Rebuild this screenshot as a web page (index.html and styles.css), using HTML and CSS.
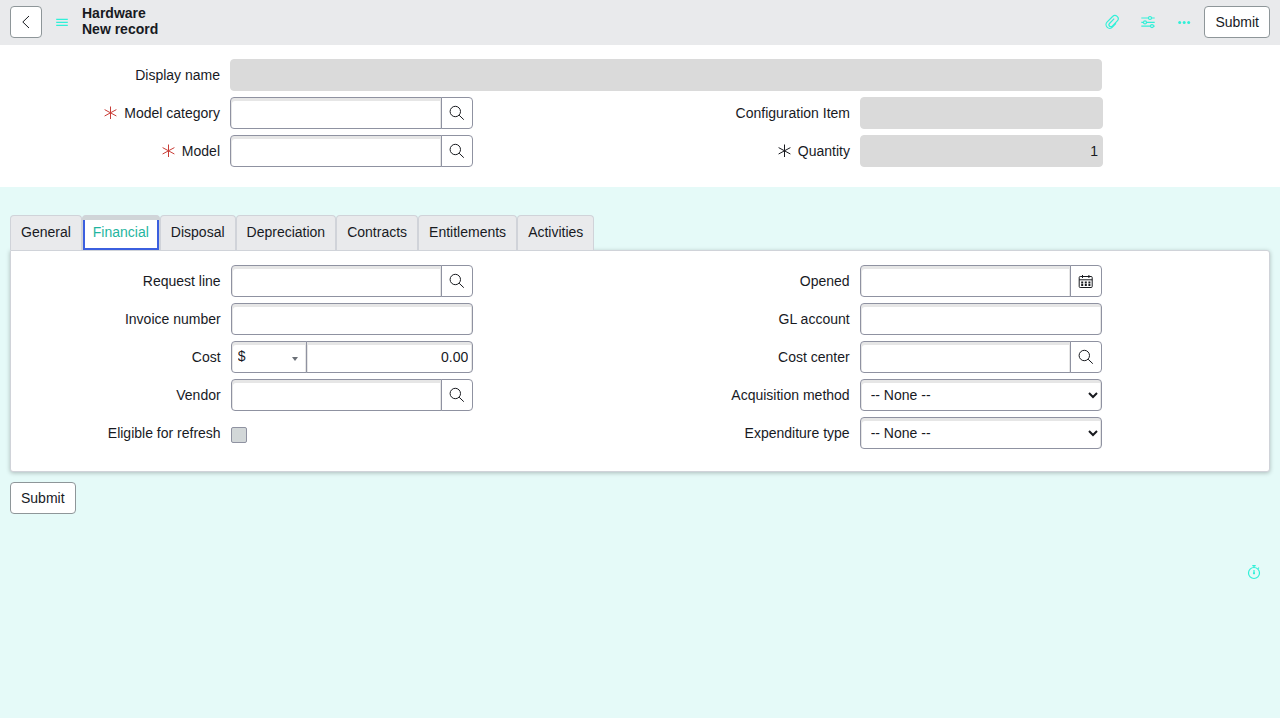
FILE: index.html
```html
<!DOCTYPE html>
<html lang="en">
<head>
<meta charset="utf-8">
<title>Hardware | New record</title>
<meta name="viewport" content="width=device-width, initial-scale=1">
<link rel="stylesheet" href="styles.css">
</head>
<body>
<svg class="sprite" aria-hidden="true">
  <symbol id="search" viewBox="0 0 16 16"><circle cx="6.3" cy="6.5" r="5.2"/><path d="M10.1 10.2 14.8 14.7"/></symbol>
  <symbol id="required" viewBox="0 0 14 14"><path d="M6.5.5v12.5M.6 3.6l11.8 6.4M12.4 3.6.6 10"/></symbol>
</svg>
<div class="page">
  <header class="toolbar">
    <button class="button button-back" type="button" aria-label="Back"><svg class="icon" viewBox="0 0 16 16"><path d="M11 2 4.8 8l6.2 6"/></svg></button>
    <button class="icon-button menu-button" type="button" aria-label="Menu"><svg class="icon" viewBox="0 0 16 16"><path d="M2.2 5.4h11.6M2.2 8.4h11.6M2.2 11.4h11.6"/></svg></button>
    <h1 class="title"><span>Hardware</span><span>New record</span></h1>
    <div class="actions">
      <button class="icon-button" type="button" aria-label="Manage attachments"><svg class="icon" viewBox="0 0 16 16"><path d="M12 9.3 8.4 13.1a3.6 3.6 0 0 1-5.4-4.9l5.6-5.7a3.2 3.2 0 0 1 4.7 4.4l-5 5.2a1.9 1.9 0 0 1-2.8-2.6l4.7-4.8"/></svg></button>
      <button class="icon-button" type="button" aria-label="Personalize form"><svg class="icon" viewBox="0 0 16 16"><path d="M1.3 4h7.2M11.5 4h3.2M1.3 8.4h2.2M6.5 8.4h8.2M1.3 12.1h9.2M13.5 12.1h1.2"/><circle cx="10" cy="4" r="1.5"/><circle cx="5" cy="8.4" r="1.5"/><circle cx="12" cy="12.1" r="1.5"/></svg></button>
      <button class="icon-button" type="button" aria-label="More options"><svg class="icon icon-solid" viewBox="0 0 16 16"><circle cx="3.7" cy="8.4" r="1.5"/><circle cx="8.2" cy="8.4" r="1.5"/><circle cx="12.7" cy="8.4" r="1.5"/></svg></button>
      <button class="button" type="submit" form="record">Submit</button>
    </div>
  </header>

  <form id="record" class="record">
    <section class="summary">
      <div class="field field-wide">
        <label for="display-name">Display name</label>
        <input class="control" id="display-name" type="text" readonly>
      </div>
      <div class="columns">
        <div class="column">
          <div class="field">
            <label for="category"><svg class="mark mark-red"><use href="#required"/></svg>Model category</label>
            <div class="group"><input class="control" id="category" type="text"><button class="addon" type="button" aria-label="Look up model category"><svg class="icon"><use href="#search"/></svg></button></div>
          </div>
          <div class="field">
            <label for="model"><svg class="mark mark-red"><use href="#required"/></svg>Model</label>
            <div class="group"><input class="control" id="model" type="text"><button class="addon" type="button" aria-label="Look up model"><svg class="icon"><use href="#search"/></svg></button></div>
          </div>
        </div>
        <div class="column">
          <div class="field">
            <label for="ci">Configuration Item</label>
            <input class="control" id="ci" type="text" readonly>
          </div>
          <div class="field">
            <label for="quantity"><svg class="mark"><use href="#required"/></svg>Quantity</label>
            <input class="control number" id="quantity" type="text" value="1" readonly>
          </div>
        </div>
      </div>
    </section>

    <section class="details">
      <div class="tabs" role="tablist">
        <button class="tab" type="button" role="tab">General</button>
        <button class="tab tab-active" type="button" role="tab" aria-selected="true"><span class="tab-focus">Financial</span></button>
        <button class="tab" type="button" role="tab">Disposal</button>
        <button class="tab" type="button" role="tab">Depreciation</button>
        <button class="tab" type="button" role="tab">Contracts</button>
        <button class="tab" type="button" role="tab">Entitlements</button>
        <button class="tab" type="button" role="tab">Activities</button>
      </div>
      <div class="panel columns" role="tabpanel">
        <div class="column">
          <div class="field">
            <label for="request">Request line</label>
            <div class="group"><input class="control" id="request" type="text"><button class="addon" type="button" aria-label="Look up request line"><svg class="icon"><use href="#search"/></svg></button></div>
          </div>
          <div class="field">
            <label for="invoice">Invoice number</label>
            <input class="control" id="invoice" type="text">
          </div>
          <div class="field">
            <label for="cost">Cost</label>
            <div class="group">
              <div class="currency"><select class="control" aria-label="Currency"><option>$</option></select></div>
              <input class="control number" id="cost" type="text" value="0.00">
            </div>
          </div>
          <div class="field">
            <label for="vendor">Vendor</label>
            <div class="group"><input class="control" id="vendor" type="text"><button class="addon" type="button" aria-label="Look up vendor"><svg class="icon"><use href="#search"/></svg></button></div>
          </div>
          <div class="field">
            <label for="eligible">Eligible for refresh</label>
            <input class="checkbox" id="eligible" type="checkbox">
          </div>
        </div>
        <div class="column">
          <div class="field">
            <label for="opened">Opened</label>
            <div class="group"><input class="control" id="opened" type="text"><button class="addon" type="button" aria-label="Select date and time"><svg class="icon" viewBox="0 0 16 16"><rect x="1.2" y="3.5" width="13" height="11" rx="1"/><path d="M1.2 6.8h13M4.5 2v3M10.9 2v3"/><path class="dots" d="M3.2 9.5h2M6.8 9.5h2M10.4 9.5h2M3.2 12h2M6.8 12h2M10.4 12h2"/></svg></button></div>
          </div>
          <div class="field">
            <label for="gl">GL account</label>
            <input class="control" id="gl" type="text">
          </div>
          <div class="field">
            <label for="center">Cost center</label>
            <div class="group"><input class="control" id="center" type="text"><button class="addon" type="button" aria-label="Look up cost center"><svg class="icon"><use href="#search"/></svg></button></div>
          </div>
          <div class="field">
            <label for="method">Acquisition method</label>
            <select class="control" id="method"><option>-- None --</option></select>
          </div>
          <div class="field">
            <label for="expenditure">Expenditure type</label>
            <select class="control" id="expenditure"><option>-- None --</option></select>
          </div>
        </div>
      </div>
      <button class="button" type="submit">Submit</button>
    </section>
  </form>

  <footer class="footer">
    <button class="icon-button" type="button" aria-label="Response time"><svg class="icon" viewBox="0 0 16 16"><circle cx="8" cy="9" r="5.5"/><path d="M6.3 1.6h3.4M8 1.6v1.9M8 6v3.6M12 4.6l1-1"/><circle cx="8" cy="9.3" r=".5"/></svg></button>
  </footer>
</div>
</body>
</html>
```
FILE: styles.css
```css
* { box-sizing: border-box; }

body {
  margin: 0;
  padding-right: 8px;
  background: #fff;
  color: #181a1f;
  font: 14px/20px "Liberation Sans", Arial, sans-serif;
}

button, input, select { font: inherit; color: inherit; margin: 0; }

.sprite { display: none; }

.page {
  display: flex;
  flex-direction: column;
  min-height: 100vh;
  background: #e5faf8;
}

.icon {
  display: block;
  width: 16px;
  height: 16px;
  fill: none;
  stroke: currentColor;
  stroke-width: 1;
}
.icon-solid { fill: currentColor; stroke: none; }
.dots { stroke-width: 2; stroke-dasharray: none; }

/* Toolbar */
.toolbar {
  display: flex;
  align-items: center;
  padding: 5px 10px 6px;
  background: #e9eaec;
}
.title { margin: 0 0 2px 12px; font-size: 14px; line-height: 16px; }
.title span { display: block; }
.actions { display: flex; align-items: center; margin-left: auto; gap: 20px; }
.actions .button { margin-left: -8px; }

.button {
  height: 32px;
  padding: 0 10px;
  border: 1px solid #8e9699;
  border-radius: 4px;
  background: #fff;
}
.button-back { padding: 0 7px; }
.icon-button {
  padding: 0;
  border: 0;
  background: none;
  color: #30f0d8;
}
.icon-button .icon { stroke-width: 1.2; }
.icon-button .icon-solid { stroke-width: 0; }
.menu-button { margin-left: 12px; }

/* Form fields */
.summary { padding: 14px 10px 20px; background: #fff; }
.columns { display: grid; grid-template-columns: 1fr 1fr; }
.column { display: grid; gap: 6px; align-content: start; }
.field {
  display: grid;
  grid-template-columns: 210fr 243fr 157fr;
  column-gap: 10px;
  align-items: center;
  min-height: 32px;
}
.field-wide { grid-template-columns: 210fr 872fr 158fr; margin-bottom: 6px; }
.field label {
  display: flex;
  align-items: center;
  justify-content: flex-end;
  gap: 6px;
}
.mark { width: 14px; height: 14px; fill: none; stroke: currentColor; }
.mark-red { color: #c83c36; }

.control {
  width: 100%;
  min-width: 0;
  height: 32px;
  padding: 0 4px;
  border: 1px solid #8f92a1;
  border-radius: 4px;
  background: #fff;
  box-shadow: inset 1px 3px #e6e6e6, inset -1px 0 #e6e6e6;
}
.control:read-only:not(select) {
  border-color: #dadada;
  background: #dadada;
  box-shadow: none;
}
select.control { padding: 0 0 0 6px; }
.number { text-align: right; }

.group { display: flex; }
.group > .control:first-child { border-radius: 4px 0 0 4px; }
.group > .control:last-child { border-radius: 0 4px 4px 0; }
.addon {
  display: grid;
  flex: none;
  place-items: center;
  width: 32px;
  height: 32px;
  margin-left: -1px;
  padding: 0;
  border: 1px solid #8f92a1;
  border-radius: 0 4px 4px 0;
  background: #fff;
}

.currency { position: relative; flex: none; width: 76px; margin-right: -1px; }
.currency .control { appearance: none; padding-bottom: 2px; border-radius: 4px 0 0 4px; }
.currency::after {
  content: "";
  position: absolute;
  top: 16px;
  right: 9px;
  border: 3px solid transparent;
  border-top: 4px solid #6b7077;
  pointer-events: none;
}

.checkbox {
  appearance: none;
  align-self: start;
  width: 16px;
  height: 16px;
  margin-top: 10px;
  border: 1px solid #8f92a1;
  border-radius: 2px;
  background: #d2d7d8;
}

/* Tabs */
.details { padding: 28px 10px 0; }
.tabs { display: flex; }
.tab {
  height: 35px;
  padding: 0 10px 2px;
  border: 1px solid #d0d3d9;
  border-bottom: 0;
  border-radius: 4px 4px 0 0;
  background: #e9eaec;
}
.tab-active { padding: 4px 0 0; background: #d0d5d8; color: #1fb5a0; }
.tab-focus {
  display: block;
  height: 30px;
  padding: 2px 8px 0;
  border: 2px solid #3b5fdf;
  border-top: 0;
  background: #fff;
}
.panel {
  padding: 14px 0 22px;
  margin-bottom: 10px;
  border: 1px solid #d0d3d9;
  border-radius: 0 3px 3px 3px;
  background: #fff;
  box-shadow: 0 1px 4px rgba(0, 0, 0, .25);
}

.footer {
  display: flex;
  justify-content: flex-end;
  padding: 50px 18px 0;
}
```
